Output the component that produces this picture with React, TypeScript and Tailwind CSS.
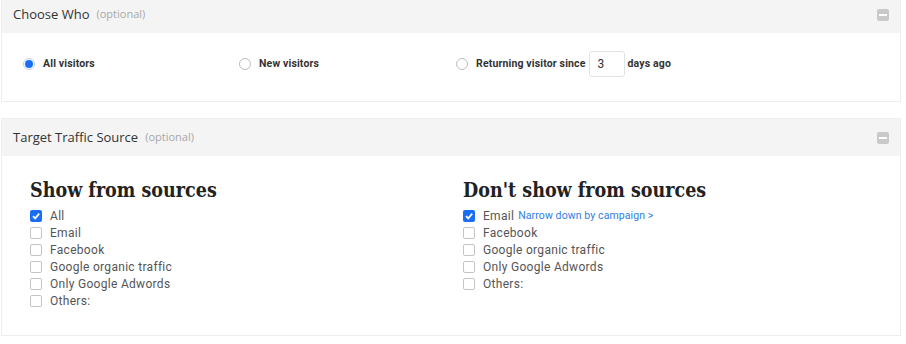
import React from 'react';

const sans = { fontFamily: '"Open Sans", "Liberation Sans", sans-serif' };
const roboto = { fontFamily: 'Roboto, "Liberation Sans", sans-serif' };
const slab = { fontFamily: '"DejaVu Serif Condensed", "DejaVu Serif", serif' };

function Collapse() {
  return (
    <span className="ml-auto flex h-[12px] w-[12px] items-center justify-center rounded-[2px] bg-[#c9c9c9]">
      <span className="h-[2px] w-[8px] bg-white" />
    </span>
  );
}

function PanelHeader({ title }: { title: string }) {
  return (
    <div className="flex h-[37px] items-center bg-[#f4f4f4] pl-[11px] pr-[11px]" style={sans}>
      <span className="text-[13px] text-[#333]">{title}</span>
      <span className="ml-[7px] text-[11px] text-[#a8a8a8]">(optional)</span>
      <Collapse />
    </div>
  );
}

function Radio({ label, checked }: { label: string; checked?: boolean }) {
  return (
    <label className="flex items-center gap-[8px]">
      <span
        className={
          checked
            ? 'flex h-[12px] w-[12px] items-center justify-center rounded-full border border-[#b9cdf7] bg-white'
            : 'h-[12px] w-[12px] rounded-full border border-[#bdbdbd] bg-white'
        }
      >
        {checked && <span className="h-[8px] w-[8px] rounded-full bg-[#1a6ef5]" />}
      </span>
      <span className="text-[10.5px] font-bold tracking-[0.15px] text-[#333]">{label}</span>
    </label>
  );
}

function Check({ label, checked, extra }: { label: string; checked?: boolean; extra?: React.ReactNode }) {
  return (
    <div className="flex h-[17px] items-center">
      <span
        className={
          checked
            ? 'flex h-[12px] w-[12px] items-center justify-center rounded-[2px] bg-[#1a6ef5]'
            : 'h-[12px] w-[12px] rounded-[2px] border border-[#c4c4c4] bg-white'
        }
      >
        {checked && (
          <svg width="10" height="10" viewBox="0 0 10 10">
            <path d="M2 5.2 L4.2 7.4 L8.2 2.6" fill="none" stroke="white" strokeWidth="1.8" />
          </svg>
        )}
      </span>
      <span className="ml-[8px] text-[12px] tracking-[0.3px] text-[#555]">{label}</span>
      {extra}
    </div>
  );
}

function SourceColumn({ title, items }: { title: string; items: { label: string; checked?: boolean; extra?: React.ReactNode }[] }) {
  return (
    <div className="flex flex-col">
      <h2 className="mb-[2px] text-[19.5px] font-bold leading-[28px] text-[#222]" style={slab}>
        {title}
      </h2>
      {items.map((it) => (
        <Check key={it.label} {...it} />
      ))}
    </div>
  );
}

export default function App() {
  return (
    <div className="h-[344px] w-[906px] overflow-hidden bg-white" style={roboto}>
      <div className="-mt-[5px] mx-[1px] w-[900px] border border-[#eeeeee]">
        <PanelHeader title="Choose Who" />
        <div className="flex h-[68px] items-center pb-[6px] pl-[21px]">
          <div className="w-[216px]">
            <Radio label="All visitors" checked />
          </div>
          <div className="w-[217px]">
            <Radio label="New visitors" />
          </div>
          <div className="flex items-center">
            <Radio label="Returning visitor since" />
            <div className="ml-[3px] flex h-[26px] w-[36px] items-center rounded-[3px] border border-[#e2e2e2] pl-[8px] text-[12px] text-[#333]">
              3
            </div>
            <span className="ml-[3px] text-[10.5px] font-bold tracking-[0.15px] text-[#333]">days ago</span>
          </div>
        </div>
      </div>

      <div className="mt-[16px] mx-[1px] w-[900px] border border-[#eeeeee]">
        <PanelHeader title="Target Traffic Source" />
        <div className="grid h-[179px] grid-cols-[433px_1fr] pl-[28px] pt-[21px]">
          <SourceColumn
            title="Show from sources"
            items={[
              { label: 'All', checked: true },
              { label: 'Email' },
              { label: 'Facebook' },
              { label: 'Google organic traffic' },
              { label: 'Only Google Adwords' },
              { label: 'Others:' },
            ]}
          />
          <SourceColumn
            title="Don't show from sources"
            items={[
              {
                label: 'Email',
                checked: true,
                extra: (
                  <a className="ml-[4px] text-[10.5px] tracking-[0.1px] text-[#2f7de1]">Narrow down by campaign &gt;</a>
                ),
              },
              { label: 'Facebook' },
              { label: 'Google organic traffic' },
              { label: 'Only Google Adwords' },
              { label: 'Others:' },
            ]}
          />
        </div>
      </div>
    </div>
  );
}
